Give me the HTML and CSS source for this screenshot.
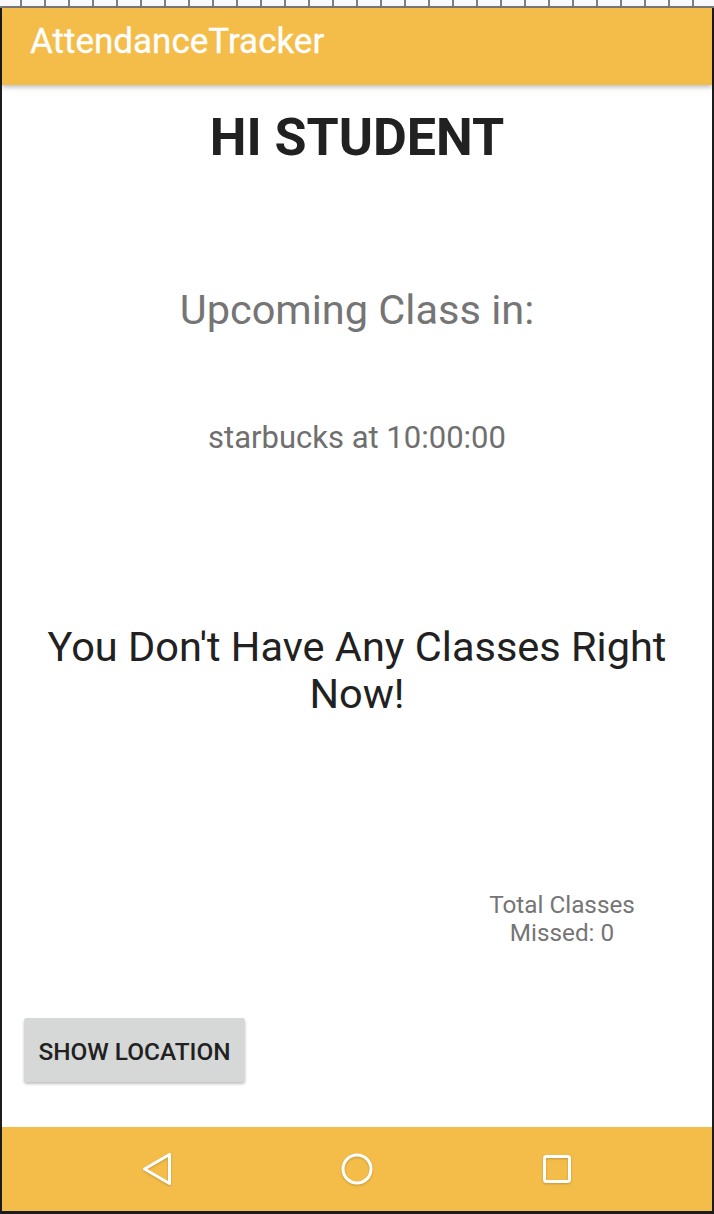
FILE: index.html
```html
<!DOCTYPE html>
<html lang="en">
<head>
<meta charset="utf-8">
<title>AttendanceTracker</title>
<link rel="stylesheet" href="styles.css">
</head>
<body>
<div class="strip"></div>
<div class="device">
  <header class="appbar">
    <span class="title">AttendanceTracker</span>
  </header>
  <main class="content">
    <h1 class="greeting">HI STUDENT</h1>
    <p class="upcoming">Upcoming Class in:</p>
    <p class="place">starbucks at 10:00:00</p>
    <p class="status">You Don't Have Any Classes Right Now!</p>
    <div class="missed-row">
      <p class="missed">Total Classes<br>Missed: 0</p>
    </div>
    <div class="button-row">
      <button class="btn">SHOW LOCATION</button>
    </div>
  </main>
  <nav class="navbar">
    <svg class="nav-icon" width="40" height="40" viewBox="0 0 40 40">
      <path d="M32.5 5.5 L32.5 34.5 L7.5 20 Z" fill="none" stroke="#fff" stroke-width="3" stroke-linejoin="round"/>
    </svg>
    <svg class="nav-icon" width="40" height="40" viewBox="0 0 40 40">
      <circle cx="20" cy="20" r="14" fill="none" stroke="#fff" stroke-width="3"/>
    </svg>
    <svg class="nav-icon" width="40" height="40" viewBox="0 0 40 40">
      <rect x="7.5" y="7.5" width="25" height="25" rx="2" fill="none" stroke="#fff" stroke-width="3"/>
    </svg>
  </nav>
</div>
</body>
</html>
```
FILE: styles.css
```css
html, body {
  margin: 0;
  padding: 0;
}
body {
  width: 714px;
  height: 1214px;
  overflow: hidden;
  background: #ffffff;
  font-family: Roboto, "Liberation Sans", sans-serif;
}
.strip {
  height: 6px;
  background-color: #f8f9fb;
  background-image: repeating-linear-gradient(to right, transparent 0 20px, #7d7f7f 20px 22px, transparent 22px 24px);
  border-bottom: 2px solid #7a7a7a;
}
.device {
  height: 1203px;
  border-left: 2px solid #1c1c1c;
  border-right: 2px solid #1c1c1c;
  border-bottom: 3px solid #1c1c1c;
  display: flex;
  flex-direction: column;
  background: #ffffff;
}
.appbar {
  position: relative;
  z-index: 1;
  height: 77px;
  flex: none;
  box-sizing: border-box;
  padding: 16px 0 0 28px;
  background: #f4bd4a;
  box-shadow: 0 2px 5px rgba(0,0,0,0.28);
}
.title {
  display: block;
  color: #ffffff;
  font-size: 35px;
  line-height: 35px;
  font-weight: 400;
  -webkit-text-stroke: 0.3px #ffffff;
}
.content {
  flex: 1;
  display: flex;
  flex-direction: column;
  align-items: center;
  text-align: center;
}
.content p, .content h1 {
  margin: 0;
}
.greeting {
  margin-top: 27px !important;
  font-size: 52px;
  line-height: 52px;
  font-weight: 700;
  color: #212121;
}
.upcoming {
  margin-top: 125px !important;
  font-size: 41.5px;
  line-height: 41px;
  color: #757575;
}
.place {
  margin-top: 92px !important;
  font-size: 31px;
  line-height: 31px;
  color: #6f6f6f;
}
.status {
  margin-top: 170px !important;
  padding: 0 16px;
  font-size: 41.5px;
  line-height: 47px;
  color: #212121;
}
.missed-row {
  align-self: stretch;
  display: flex;
  justify-content: flex-end;
  padding-right: 50px;
  margin-top: 174px;
}
.missed {
  width: 200px;
  font-size: 24.3px;
  line-height: 28px;
  color: #757575;
}
.button-row {
  align-self: stretch;
  display: flex;
  padding-left: 22px;
  margin-top: 71px;
}
.btn {
  width: 221px;
  height: 64px;
  border: none;
  border-radius: 3px;
  background: #d6d7d7;
  box-shadow: 0 2px 3px rgba(0,0,0,0.25);
  font-family: Roboto, "Liberation Sans", sans-serif;
  font-size: 24.4px;
  line-height: 24px;
  font-weight: 500;
  color: #212121;
  padding: 4px 0 0;
}
.navbar {
  height: 84px;
  flex: none;
  background: #f4bd4a;
  display: flex;
  align-items: center;
  justify-content: center;
  gap: 160px;
}
.nav-icon {
  display: block;
  filter: drop-shadow(0 1px 1px rgba(0,0,0,0.2));
}
```
